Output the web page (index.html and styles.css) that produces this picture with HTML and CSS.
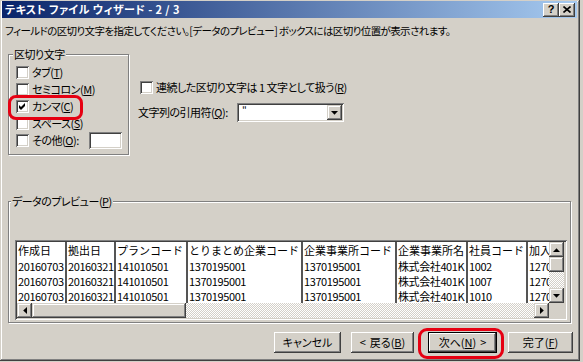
FILE: index.html
```html
<!DOCTYPE html>
<html lang="ja">
<head>
<meta charset="utf-8">
<title>テキスト ファイル ウィザード - 2 / 3</title>
<link rel="stylesheet" href="styles.css">
</head>
<body>
<div class="window">
  <div class="titlebar">
    <span class="title">テキスト ファイル ウィザード - 2 / 3</span>
    <div class="tb-buttons">
      <span class="tb-btn help">?</span>
      <span class="tb-btn close"><svg width="8" height="7" viewBox="0 0 8 7"><path d="M0.5 0.5 L7.5 6.5 M7.5 0.5 L0.5 6.5" stroke="#000" stroke-width="1.6"/></svg></span>
    </div>
  </div>

  <p class="instr">フィールドの区切り文字を指定してください。[データのプレビュー] ボックスには区切り位置が表示されます。</p>

  <div class="top">
    <div class="group delim">
      <div class="group-title">区切り文字</div>
      <div class="rows">
        <div class="row"><span class="cb"></span><span>タブ(<u>T</u>)</span></div>
        <div class="row"><span class="cb"></span><span>セミコロン(<u>M</u>)</span></div>
        <div class="row"><span class="cb"><svg width="9" height="9" viewBox="0 0 9 9"><path d="M1 3 L3 5 L7 1 L7 4 L3 8 L1 6 Z" fill="#000"/></svg></span><span>カンマ(<u>C</u>)</span></div>
        <div class="row"><span class="cb"></span><span>スペース(<u>S</u>)</span></div>
        <div class="row"><span class="cb"></span><span>その他(<u>O</u>):</span><span class="edit"></span></div>
      </div>
      <span class="mark mark-comma"></span>
    </div>

    <div class="options">
      <div class="row"><span class="cb"></span><span>連続した区切り文字は&nbsp;1&nbsp;文字として扱う(<u>R</u>)</span></div>
      <div class="quote-row">
        <span class="quote-label">文字列の引用符(<u>Q</u>):</span>
        <div class="combo">
          <span class="combo-text">"</span>
          <span class="sbtn combo-btn"><svg width="7" height="4" viewBox="0 0 7 4"><path d="M0 0 H7 L3.5 3.8 Z" fill="#000"/></svg></span>
        </div>
      </div>
    </div>
  </div>

  <div class="group preview">
    <div class="group-title">データのプレビュー(<u>P</u>)</div>
    <div class="listbox">
      <div class="list-main">
        <div class="table">
          <div class="cell">作成日</div><div class="cell">拠出日</div><div class="cell">プランコード</div><div class="cell">とりまとめ企業コード</div><div class="cell">企業事業所コード</div><div class="cell">企業事業所名</div><div class="cell">社員コード</div><div class="cell last">加入</div>
          <div class="cell num">20160703</div><div class="cell num">20160321</div><div class="cell num">141010501</div><div class="cell num">1370195001</div><div class="cell num">1370195001</div><div class="cell num">株式会社401K</div><div class="cell num">1002</div><div class="cell num last">1270</div>
          <div class="cell num">20160703</div><div class="cell num">20160321</div><div class="cell num">141010501</div><div class="cell num">1370195001</div><div class="cell num">1370195001</div><div class="cell num">株式会社401K</div><div class="cell num">1007</div><div class="cell num last">1270</div>
          <div class="cell num">20160703</div><div class="cell num">20160321</div><div class="cell num">141010501</div><div class="cell num">1370195001</div><div class="cell num">1370195001</div><div class="cell num">株式会社401K</div><div class="cell num">1010</div><div class="cell num last">1270</div>
        </div>
        <div class="vscroll">
          <span class="sbtn"><svg width="7" height="4" viewBox="0 0 7 4"><path d="M0 4 H7 L3.5 0.2 Z" fill="#000"/></svg></span>
          <span class="sbtn thumb"></span>
          <span class="track"></span>
          <span class="sbtn"><svg width="7" height="4" viewBox="0 0 7 4"><path d="M0 0 H7 L3.5 3.8 Z" fill="#000"/></svg></span>
        </div>
      </div>
      <div class="list-foot">
        <div class="hscroll">
          <span class="sbtn"><svg width="4" height="7" viewBox="0 0 4 7"><path d="M4 0 V7 L0.2 3.5 Z" fill="#000"/></svg></span>
          <span class="sbtn hthumb"></span>
          <span class="track"></span>
          <span class="sbtn"><svg width="4" height="7" viewBox="0 0 4 7"><path d="M0 0 V7 L3.8 3.5 Z" fill="#000"/></svg></span>
        </div>
        <div class="corner"></div>
      </div>
    </div>
  </div>

  <div class="buttons">
    <span class="btn cancel">キャンセル</span>
    <span class="btn back"><span class="chev-l">&lt;</span>戻る(<u>B</u>)</span>
    <span class="btn next default">次へ(<u>N</u>)<span class="chev-r">&gt;</span></span>
    <span class="btn finish">完了(<u>F</u>)</span>
    <span class="mark mark-next"></span>
  </div>
</div>
</body>
</html>
```

FILE: styles.css
```css
* { box-sizing: border-box; }
html, body { margin: 0; padding: 0; }
body {
  width: 583px;
  height: 362px;
  overflow: hidden;
  background: #d4d0c8;
  color: #000;
  font-family: "Noto Sans CJK JP", "Noto Sans", sans-serif;
  font-size: 11px;
  line-height: 13px;
  letter-spacing: -0.5px;
  font-feature-settings: "palt";
}
u { text-decoration: underline; text-underline-offset: 1px; }

.window {
  width: 580px;
  height: 361px;
  background: #d4d0c8;
  padding: 1px 3px 3px 2px;
  box-shadow: inset -1px -1px #404040, inset 1px 1px #d4d0c8, inset -2px -2px #808080, inset 2px 2px #fff;
  display: flex;
  flex-direction: column;
  position: relative;
}

/* title bar */
.titlebar {
  height: 17px;
  flex: none;
  background: linear-gradient(to right, #0a246a, #a6caf0);
  display: flex;
  align-items: center;
  justify-content: space-between;
  padding: 0 2px 0 3px;
}
.title { color: #fff; font-weight: bold; letter-spacing: 0.4px; }
.tb-buttons { display: flex; }
.tb-btn {
  width: 16px;
  height: 14px;
  display: flex;
  align-items: center;
  justify-content: center;
  background: #d4d0c8;
  box-shadow: inset -1px -1px #404040, inset 1px 1px #fff, inset -2px -2px #808080;
  font-family: "Liberation Sans", sans-serif;
  font-weight: bold;
  font-size: 11px;
  letter-spacing: 0;
}

.instr {
  margin: 6px 0 0 3px;
  white-space: nowrap;
  font-size: 10.5px;
  letter-spacing: -0.6px;
}

/* top area */
.top { display: flex; align-items: flex-start; margin-top: 17px; }

.group {
  border: 1px solid #808080;
  box-shadow: 1px 1px #fff, inset 1px 1px #fff;
  position: relative;
}
.group-title {
  margin-top: -7px;
  width: max-content;
  background: #d4d0c8;
  padding: 0 1px;
}

.delim {
  margin-left: 6px;
  width: 121px;
  height: 101px;
  padding: 0 6px 0 7px;
}
.delim .group-title { margin-left: -3px; }
.rows { margin-top: 3px; display: flex; flex-direction: column; }
.row { height: 17px; display: flex; align-items: center; gap: 3px; white-space: nowrap; }

.cb {
  width: 13px;
  height: 13px;
  flex: none;
  background: #fff;
  box-shadow: inset 1px 1px #808080, inset -1px -1px #fff, inset 2px 2px #404040, inset -2px -2px #d4d0c8;
  display: flex;
  align-items: center;
  justify-content: center;
}
.edit {
  margin-left: auto;
  width: 33px;
  height: 17px;
  background: #fff;
  box-shadow: inset 1px 1px #808080, inset -1px -1px #fff, inset 2px 2px #404040, inset -2px -2px #d4d0c8;
}

.mark {
  position: absolute;
  border: 3px solid #e60012;
  border-radius: 8px;
}
.mark-comma { left: -1px; top: 40px; width: 75px; height: 25px; }

.options { margin-left: 11px; padding-top: 25px; }
.quote-row { display: flex; align-items: center; margin: 7px 0 0 -2px; }
.quote-label { width: 99px; white-space: nowrap; }
.combo {
  width: 107px;
  height: 19px;
  background: #fff;
  box-shadow: inset 1px 1px #808080, inset -1px -1px #fff, inset 2px 2px #404040, inset -2px -2px #d4d0c8;
  display: flex;
  align-items: center;
  justify-content: space-between;
  padding: 2px;
}
.combo-text { padding-left: 3px; font-size: 10px; line-height: 12px; align-self: flex-start; }
.sbtn {
  width: 15px;
  height: 15px;
  flex: none;
  background: #d4d0c8;
  box-shadow: inset -1px -1px #404040, inset 1px 1px #d4d0c8, inset -2px -2px #808080, inset 2px 2px #fff;
  display: flex;
  align-items: center;
  justify-content: center;
}
.combo-btn { width: 15px; height: 15px; }

/* preview */
.preview {
  margin: 46px 0 0 6px;
  width: 563px;
  height: 122px;
  padding: 0 3px 0 6px;
}
.preview .group-title { margin-left: -4px; }
.listbox {
  margin-top: 32px;
  width: 552px;
  height: 80px;
  background: #d4d0c8;
  box-shadow: inset 1px 1px #808080, inset -1px -1px #fff, inset 2px 2px #404040, inset -2px -2px #d4d0c8;
  padding: 2px;
  display: flex;
  flex-direction: column;
}
.list-main { display: flex; height: 61px; }
.table {
  width: 532px;
  background: #fff;
  display: grid;
  grid-template-columns: 50px 49px 72px 115px 94px 71px 60px 21px;
  grid-template-rows: 16px 15px 15px 15px;
  font-feature-settings: normal;
  letter-spacing: 0;
  overflow: hidden;
}
.cell {
  border-right: 2px solid #555;
  padding: 1px 0 0 1px;
  white-space: nowrap;
  overflow: hidden;
  line-height: 14px;
}
.cell.last { border-right: none; }
.num { letter-spacing: -0.4px; }

.vscroll { width: 15px; display: flex; flex-direction: column; }
.vscroll .sbtn { height: 15px; }
.vscroll .thumb { height: 15px; }
.track {
  flex: 1;
  background: repeating-conic-gradient(#fff 0 25%, #d4d0c8 0 50%) 0 0 / 2px 2px;
}
.list-foot { display: flex; height: 15px; }
.hscroll { width: 532px; display: flex; }
.hthumb { width: 154px; }
.corner { width: 15px; background: #d4d0c8; }

/* buttons */
.buttons {
  margin-top: 9px;
  display: flex;
  padding-left: 272px;
  position: relative;
}
.btn {
  height: 21px;
  display: flex;
  align-items: center;
  justify-content: center;
  white-space: nowrap;
  letter-spacing: 0;
  background: #d4d0c8;
  box-shadow: inset -1px -1px #404040, inset 1px 1px #fff, inset -2px -2px #808080, inset 2px 2px #d4d0c8;
}
.chev-l { margin-right: 4px; }
.chev-r { margin-left: 4px; }
.cancel { width: 67px; }
.back { width: 63px; margin-left: 10px; }
.next { width: 69px; margin-left: 14px; }
.finish { width: 65px; margin-left: 11px; }
.btn.default {
  box-shadow: inset 0 0 0 1px #000, inset -2px -2px #404040, inset 2px 2px #fff, inset -3px -3px #808080;
}
.mark-next { left: 416px; top: -4px; width: 86px; height: 31px; border-radius: 9px; }
```
